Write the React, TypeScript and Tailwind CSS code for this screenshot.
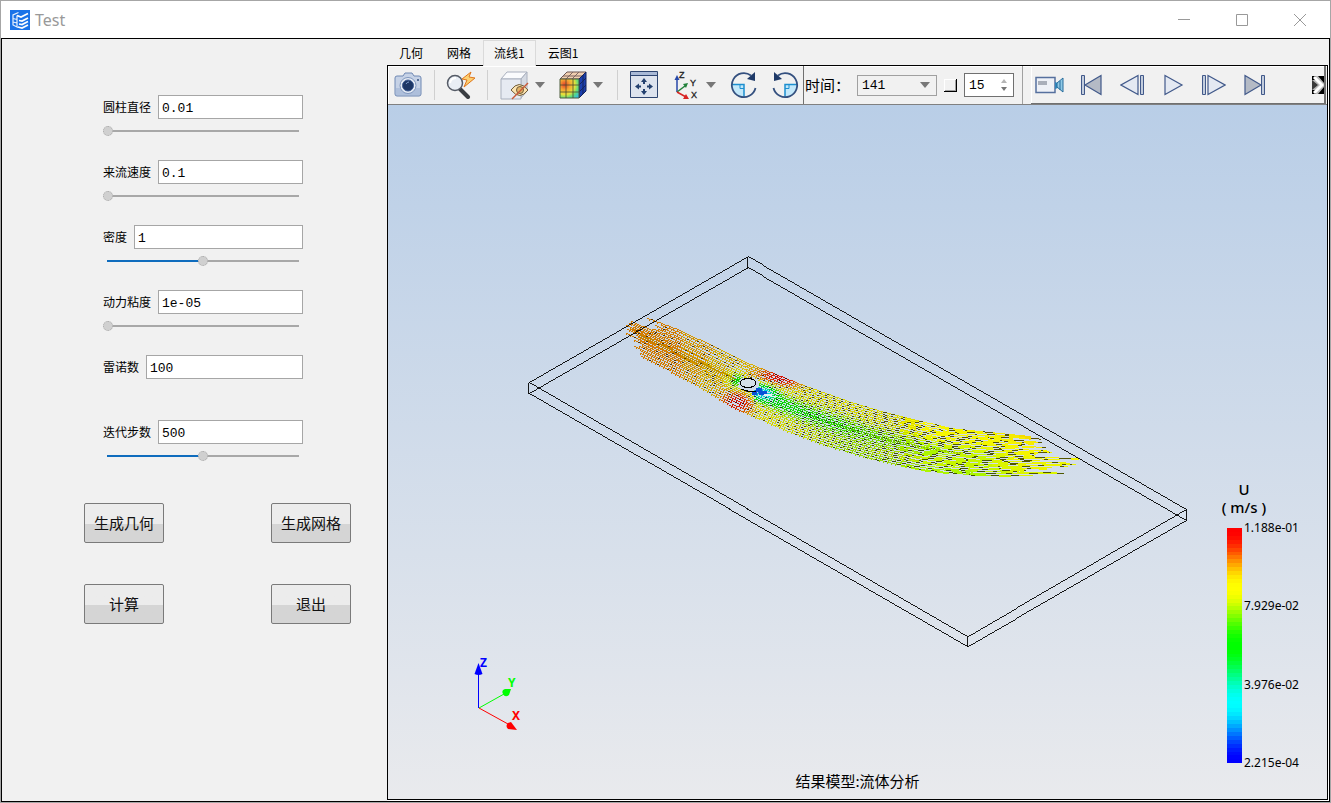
import { useState, type ReactNode } from "react";
import clsx from "clsx";

const params = [
  { id: "diameter", label: "圆柱直径", value: "0.01", slider: 0 },
  { id: "velocity", label: "来流速度", value: "0.1", slider: 0 },
  { id: "density", label: "密度", value: "1", slider: 50 },
  { id: "viscosity", label: "动力粘度", value: "1e-05", slider: 0 },
  { id: "reynolds", label: "雷诺数", value: "100", slider: null },
  { id: "steps", label: "迭代步数", value: "500", slider: 50 },
];

const actions = ["生成几何", "生成网格", "计算", "退出"];
const tabs = ["几何", "网格", "流线1", "云图1"];
const legendLabels = ["1.188e-01", "7.929e-02", "3.976e-02", "2.215e-04"];

// blue -> cyan -> green -> yellow -> red
const stops = [
  [0, 0, 255],
  [0, 255, 255],
  [0, 255, 0],
  [255, 255, 0],
  [255, 0, 0],
];

function rainbow(s: number, light = 1) {
  const t = Math.min(0.9999, Math.max(0, s)) * 4;
  const i = Math.floor(t);
  const f = t - i;
  const e = f * f * (3 - 2 * f);
  const rgb = stops[i].map((c, k) => Math.round((c + (stops[i + 1][k] - c) * e) * light));
  return `rgb(${rgb.join(",")})`;
}

const BANDS = 60;
const bands = Array.from({ length: BANDS }, (_, i) => rainbow(1 - i / (BANDS - 1)));

type Point = [number, number];

const upperEdge: Point[] = [
  [626, 308], [647, 318], [677, 329], [717, 348], [750, 364], [800, 384],
  [850, 402], [887, 413], [950, 428], [1000, 433], [1040, 437], [1090, 441],
];
const lowerEdge: Point[] = [
  [626, 348], [640, 355], [700, 387], [733, 407], [783, 429], [820, 443],
  [870, 458], [920, 469], [975, 475], [1090, 475],
];

function edgeAt(edge: Point[], x: number) {
  const i = Math.max(1, edge.findIndex((p) => p[0] >= x));
  const [x0, y0] = edge[i - 1];
  const [x1, y1] = edge[i];
  return y0 + ((x - x0) / (x1 - x0)) * (y1 - y0);
}

const noise = (n: number) => {
  const v = Math.sin(n * 12.9898) * 43758.5453;
  return v - Math.floor(v);
};

const bell = (d: number, w: number) => Math.exp(-(d * d) / (w * w));

function speedAt(x: number, y: number, v: number) {
  const right = Math.min(1, Math.max(0, (x - 680) / 160));
  let s = 0.85 - right * (0.09 + 0.1 * v);
  if (x > 980) s += 0.04 * Math.min(1, (x - 980) / 50);
  s += 0.18 * bell(Math.hypot((x - 778) / 2.6, y - 378), 10);
  s += 0.18 * bell(Math.hypot((x - 738) / 1.4, y - 402), 13);
  if (x > 752) s -= 0.34 * bell(v - 0.5, 0.2) * Math.exp(-(x - 752) / 90);
  s -= 0.4 * bell(Math.hypot((x - 762) / 1.6, y - 391), 8);
  s -= 0.3 * bell(Math.hypot(x - 736, y - 380), 8);
  return s;
}

const LINES = 24;
const starts = [647, 661, 655, 658, 652, 631, 634, 629, 633, 626, 632, 630, 627, 636, 638, 626, 640, 634, 642, 639, 634, 641, 640, 641];
const ends = [1030, 1041, 1012, 1042, 1034, 1024, 1046, 1018, 1048, 1052, 1036, 1034, 1078, 1060, 1040, 1070, 1076, 1068, 1052, 1046, 1026, 1056, 1063, 1032];

function buildStreaks() {
  const byColor = new Map<string, string>();
  const add = (color: string, x: number, y: number, w: number) =>
    byColor.set(color, `${byColor.get(color) ?? ""}M${x} ${y}h${w}v1h-${w}z`);
  for (let l = 0; l < LINES; l++) {
    const v = l / (LINES - 1);
    const yAt = (x: number) => {
      const top = edgeAt(upperEdge, x);
      const height = edgeAt(lowerEdge, x) - top;
      // lines are drawn towards the centre upstream of the cylinder
      const pull = x < 745 ? 0.04 * Math.sin(v * Math.PI * 2) : 0;
      return Math.round(top + (v + pull) * height);
    };
    let x = starts[l];
    let next = x + 3 + Math.round(noise(l * 5.3) * 6);
    let markEnd = 0;
    while (x < ends[l]) {
      const y = yAt(x);
      const far = Math.max(0, (x - 860) / 200);
      if (x >= next) {
        markEnd = x + 2 + Math.round(far * 12 * noise(l * 3.1 + x));
        next = x + Math.round(6 + far * 16 + noise(l * 7.7 + x * 0.31) * (3 + far * 12));
      }
      if (Math.hypot((x - 748) / 11, (y - 384) / 7) >= 1) {
        const s = Math.round(speedAt(x, y, v) * 50) / 50;
        const dark = x < markEnd && (x > 800 || noise(l + x * 3) < 0.4);
        const light = dark ? 0.34 : x < 740 ? 0.84 : x < 920 ? 0.86 : 0.96;
        add(rainbow(s, light), x, y, 2);
        if (!dark && x < 900 && (x + l * 2) % 4 < 2) add(rainbow(s, 0.8), x, y + 1, 1);
        // rows thicken in runs where the streaks stretch out
        if (!dark && x >= 900 && noise(l * 4.7 + Math.floor((x + l * 5) / 14)) < 0.5) add(rainbow(s, 0.96), x, y + 1, 2);
      }
      x += 2;
    }
  }
  // dense streak on the symmetry line
  for (let x = 640; x < 735; x += 2) {
    const y = Math.round(332 + (x - 634) * 0.46);
    add("rgb(184,134,0)", x, y, 2);
    add("rgb(184,134,0)", x, y + 2, 1);
  }
  for (let x = 800; x < 960; x += 3) {
    const top = edgeAt(upperEdge, x);
    const y = Math.round(top + 0.53 * (edgeAt(lowerEdge, x) - top));
    const color = rainbow(speedAt(x, y, 0.53), 0.78);
    add(color, x, y, 2);
    add(color, x + 1, y + 1, 1);
  }
  return [...byColor];
}

const streaks = buildStreaks();

function Scene() {
  return (
    <svg viewBox="388 105 939 694" className="absolute inset-0 h-full w-full" aria-hidden="true">
      <g shapeRendering="crispEdges" fill="none" strokeWidth="1">
        {streaks.map(([color, d]) => (
          <path key={color} d={d} fill={color} />
        ))}
        <path d="M756 388h6v3h5v4h-8v-3h-4zM752 392h5v3h-5z" fill="#0a50d8" />
        <path d="M764 394h8v2h-8zM771 396h6v1h-6z" fill="#e4f0f4" />
        <path
          stroke="#000"
          strokeWidth=".9"
          d="M747.5 256.5L528.5 382.5L967.500 636.5L1186.500 509.5ZM747.500 267.5L528.5 393.5L967.500 646.5L1186.500 520.5ZM747.500 256.5V267.5M528.5 382.5V393.5M967.500 636.5V646.5M1186.500 509.5V520.5"
        />
        <ellipse cx="748" cy="383" rx="8" ry="4.5" fill="#d4dfe8" stroke="#000" />
        <path d="M741 389q7 3 15 3" stroke="#000" />
      </g>
      <g fontFamily="'Noto Sans', sans-serif" fontSize="12" fontWeight="700">
        <path d="M478.5 708V672" stroke="#00f" />
        <path d="M478.5 663l4 11q-4 2-8 0z" fill="#00f" />
        <text x="480" y="667" fill="#00f">Z</text>
        <path d="M479 708L504 694" stroke="#0f0" />
        <path d="M511 689l-2 6q-4 3-6-1t2-5z" fill="#0f0" />
        <text x="508" y="687" fill="#0f0">Y</text>
        <path d="M479 708L508 724" stroke="#f00" />
        <path d="M517 730l-9-1q-3-3 0-6l3-1z" fill="#f00" />
        <text x="512" y="720" fill="#f00">X</text>
      </g>
    </svg>
  );
}

function Legend() {
  return (
    <div className="absolute right-7 bottom-[30px] font-['Noto_Sans',sans-serif] text-black">
      <div className="mb-1.5 w-[42px] text-center text-[15px] leading-[18px] font-medium">
        <div>U</div>
        <div className="-mx-4 whitespace-nowrap">( m/s )</div>
      </div>
      <div className="flex gap-0.5 pl-1">
        <div className="mt-1.5 mb-1.5 flex h-[235px] w-[15px] flex-col">
          {bands.map((color, i) => (
            <div key={i} className="flex-1" style={{ backgroundColor: color }} />
          ))}
        </div>
        <div className="flex flex-col justify-between text-xs leading-3">
          {legendLabels.map((label) => (
            <span key={label}>{label}</span>
          ))}
        </div>
      </div>
    </div>
  );
}

function ToolButton({ label, className, children }: { label: string; className?: string; children: ReactNode }) {
  return (
    <button type="button" aria-label={label} className={clsx("flex h-8 shrink-0 items-center justify-center", className)}>
      {children}
    </button>
  );
}

function Separator({ className }: { className?: string }) {
  return <div className={clsx("h-[30px] w-px shrink-0 bg-[#d0d0d0]", className)} />;
}

function DropArrow({ label, className }: { label: string; className?: string }) {
  return (
    <ToolButton label={label} className={clsx("w-[10px]", className)}>
      <svg width="10" height="6" viewBox="0 0 10 6">
        <path d="M0 0h10L5 6z" fill="#777" />
      </svg>
    </ToolButton>
  );
}

function CameraIcon() {
  return (
    <svg width="28" height="26" viewBox="0 0 28 26">
      <path d="M1 6q0-2 2-2h6l2-3h7l2 3h5q2 0 2 2v16q0 2-2 2H3q-2 0-2-2z" fill="#c6d2e6" stroke="#6f88b3" />
      <path d="M2 16h24v7H2z" fill="#9fb3d4" opacity=".6" />
      <circle cx="14" cy="13.500" r="8" fill="#e6ecf5" stroke="#7f96bd" />
      <circle cx="14" cy="13.500" r="5.500" fill="#1d3766" stroke="#3f5d93" />
      <path d="M12 12q1-2 3-2" stroke="#7f9ccb" fill="none" />
      <circle cx="24" cy="8" r="1" fill="#34507f" />
    </svg>
  );
}

function ProbeIcon() {
  return (
    <svg width="30" height="28" viewBox="0 0 30 28">
      <path d="M14 18l8 8" stroke="#3a3d42" strokeWidth="4" strokeLinecap="round" />
      <circle cx="9" cy="12" r="7.500" fill="#e9eef5" stroke="#555b66" strokeWidth="1.500" />
      <path d="M4 12q1-5 6-5" stroke="#fff" strokeWidth="2" fill="none" />
      <path d="M25 1l-9 7 5 1-3 7 11-9-6-1z" fill="#fcd071" stroke="#e0761c" />
    </svg>
  );
}

function HiddenCubeIcon() {
  return (
    <svg width="29" height="29" viewBox="0 0 29 29">
      <path d="M1 8l6-7h20l-6 7z" fill="#fafbfd" stroke="#a9b0be" />
      <path d="M21 8l6-7v19l-6 7z" fill="#d5dae3" stroke="#a9b0be" />
      <path d="M1 8h20v20H1z" fill="#e6eaf2" stroke="#a9b0be" />
      <path d="M11 19q8-11 17 0-8 11-17 0z" fill="#fbe3b0" stroke="#6d5a3b" />
      <circle cx="20" cy="19" r="3.500" fill="#e2b468" stroke="#6d5a3b" />
      <path d="M28 12L12 28" stroke="#c85838" strokeWidth="1.500" />
    </svg>
  );
}

function ResultCubeIcon() {
  return (
    <svg width="28" height="28" viewBox="0 0 28 28">
      <defs>
        <radialGradient id="cubeFace" cx="0.25" cy="0.3" r=".95">
          <stop offset="0" stopColor="#e8402a" />
          <stop offset=".3" stopColor="#f7a832" />
          <stop offset=".55" stopColor="#e6e23a" />
          <stop offset=".75" stopColor="#5fdc7a" />
          <stop offset="1" stopColor="#2ab8f0" />
        </radialGradient>
      </defs>
      <path d="M1 8l7-7h19l-7 7z" fill="#f0cfb0" stroke="#6a5550" />
      <path d="M7 8l7-7M13 8l7-7M4 5h20" stroke="#7d6560" />
      <path d="M20 8l7-7v19l-7 7z" fill="#1b3fae" stroke="#15245c" />
      <path d="M20 14l7-7M20 21l7-7M24 4v19" stroke="#15245c" />
      <path d="M1 8h19v19H1z" fill="url(#cubeFace)" stroke="#4c5c3c" />
      <path d="M7 8v19M14 8v19M1 14h19M1 21h19" stroke="#4c4a30" strokeWidth=".8" />
    </svg>
  );
}

function FitIcon() {
  return (
    <svg width="28" height="28" viewBox="0 0 28 28">
      <path d="M.5.5h27v26H.5z" fill="#dde3ee" stroke="#2d4470" />
      <path d="M1 1h26v3H1z" fill="#a9b9d6" />
      <path d="M1 4.500h26" stroke="#2d4470" />
      <path d="M14 7l3 4h-2v2h-2v-2h-2zM14 24l3-4h-2v-2h-2v2h-2zM5 15.500l4-3v2h2v2H9v2zM23 15.500l-4-3v2h-2v2h2v2z" fill="#23406f" />
    </svg>
  );
}

function AxesIcon() {
  return (
    <svg width="24" height="30" viewBox="0 0 24 30">
      <path d="M3 22V9" stroke="#2747a8" strokeWidth="1.500" />
      <path d="M3 5l2.500 5h-5z" fill="#2747a8" />
      <path d="M3 22l8-6" stroke="#23823b" strokeWidth="1.500" />
      <path d="M14 13l-2 5-3-4z" fill="#23823b" />
      <path d="M3 22l9 5" stroke="#d82525" strokeWidth="1.500" />
      <path d="M15 29l-6 0 3-5z" fill="#d82525" />
      <g fontFamily="'Liberation Sans', sans-serif" fontSize="9" fill="#222" stroke="#222" strokeWidth=".3">
        <text x="5" y="8">Z</text>
        <text x="16" y="16">Y</text>
        <text x="17" y="28">X</text>
      </g>
    </svg>
  );
}

function RotateIcon({ flip }: { flip?: boolean }) {
  return (
    <svg width="28" height="28" viewBox="0 0 28 28" className={flip ? "-scale-x-100" : undefined}>
      <path d="M2 13.500h12V26A12 12 0 0 1 2 13.500z" fill="#c3e8fa" />
      <path d="M2 13.500h12V26" fill="none" stroke="#1c8fd0" strokeWidth="1.500" />
      <path d="M10 13.500v4h4" fill="none" stroke="#1c8fd0" />
      <path d="M21 4.500A12 12 0 1 0 25.500 17" fill="none" stroke="#34507f" strokeWidth="1.800" />
      <path d="M25 1v9l-8-2z" fill="#1f3a68" />
    </svg>
  );
}

function RecordIcon() {
  return (
    <svg width="30" height="18" viewBox="0 0 30 18">
      <path d="M1 1.500h19v15H1z" fill="#eef1f7" stroke="#56709e" strokeWidth="1.500" />
      <path d="M3 5h9v4H3z" fill="#a9afba" />
      <path d="M20 6l3 1v5l-3 1z" fill="#2f87bd" />
      <path d="M22 7l6-5v14l-6-5z" fill="#8fc9e6" stroke="#276c9c" />
      <path d="M25 5v9" stroke="#276c9c" />
    </svg>
  );
}

// prev/next step and first/last frame share one triangle and bar, mirrored as needed
function PlaybackIcon({ kind, flip }: { kind: "end" | "step" | "play"; flip?: boolean }) {
  return (
    <svg width="24" height="22" viewBox="0 0 24 22" className={flip ? "-scale-x-100" : undefined}>
      {kind === "play" && <path d="M4 1.500L21 11 4 20.500z" fill="#e4e9f2" stroke="#41598a" strokeWidth="1.200" />}
      {kind === "end" && (
        <>
          <path d="M2 1.500L18 11 2 20.500z" fill="#b4bac5" stroke="#41598a" strokeWidth="1.200" />
          <path d="M18.500 1.500h3v19h-3z" fill="#c3cddd" stroke="#41598a" />
        </>
      )}
      {kind === "step" && (
        <>
          <path d="M.5 1.500h3v19h-3z" fill="#c3cddd" stroke="#41598a" />
          <path d="M6 1.500L23 11 6 20.500z" fill="#e4e9f2" stroke="#41598a" strokeWidth="1.200" />
        </>
      )}
    </svg>
  );
}

function Toolbar() {
  return (
    <div className="flex h-[39px] shrink-0 items-center overflow-hidden border-b border-[#808080] bg-[#f1f1f1] shadow-[inset_1px_1px_0_#fff]">
      <ToolButton label="截图" className="ml-1.5"><CameraIcon /></ToolButton>
      <Separator className="mr-[11px] ml-3" />
      <ToolButton label="探测"><ProbeIcon /></ToolButton>
      <Separator className="mr-3 ml-[11px]" />
      <ToolButton label="显示"><HiddenCubeIcon /></ToolButton>
      <DropArrow label="显示选项" className="ml-1.5" />
      <ToolButton label="云图" className="ml-3.5"><ResultCubeIcon /></ToolButton>
      <DropArrow label="云图选项" className="ml-1.5" />
      <Separator className="mr-3 ml-3.5" />
      <ToolButton label="适应窗口"><FitIcon /></ToolButton>
      <ToolButton label="视角" className="ml-4"><AxesIcon /></ToolButton>
      <DropArrow label="视角选项" className="ml-2" />
      <ToolButton label="顺时针旋转" className="ml-3.5"><RotateIcon /></ToolButton>
      <ToolButton label="逆时针旋转" className="ml-[13px]"><RotateIcon flip /></ToolButton>

      <div className="ml-1 flex h-full shrink-0 items-center border-l border-[#707070] pl-px">
        <label htmlFor="time" className="w-[52px] text-[15px] whitespace-nowrap">时间：</label>
        <div className="relative">
          <select
            id="time"
            className="block h-[21px] w-20 appearance-none border border-[#a0a0a0] bg-[#f1f1f1] pl-1 font-['Liberation_Mono',monospace] text-[13px]"
          >
            <option>141</option>
          </select>
          <svg width="10" height="6" viewBox="0 0 10 6" className="pointer-events-none absolute top-[7px] right-[7px]">
            <path d="M0 0h10L5 6z" fill="#777" />
          </svg>
        </div>
        <input
          type="checkbox"
          aria-label="循环"
          className="ml-[7px] h-[13px] w-[13px] appearance-none border-r border-b border-black bg-[#f1f1f1] shadow-[inset_1px_1px_0_#fff,inset_-1px_-1px_0_#a0a0a0]"
        />
        <div className="relative ml-[7px]">
          <input
            type="number"
            aria-label="帧率"
            defaultValue={15}
            className="block h-6 w-[50px] border border-[#707070] bg-white pl-1 font-['Liberation_Mono',monospace] text-[13px] [appearance:textfield] [&::-webkit-inner-spin-button]:appearance-none"
          />
          <svg width="6" height="12" viewBox="0 0 6 12" className="pointer-events-none absolute top-1.5 right-[7px]">
            <path d="M3 0l3 4H0z" fill="#b5b5b5" />
            <path d="M0 8h6l-3 4z" fill="#777" />
          </svg>
        </div>
      </div>

      <div className="ml-2 flex h-full min-w-0 flex-1 border-l border-[#a0a0a0] pr-px pl-2">
        <div className="flex min-w-0 flex-1 items-center border-r-2 border-b border-[#707070] pl-1 shadow-[inset_1px_1px_0_#fff]">
          <ToolButton label="录制"><RecordIcon /></ToolButton>
          <ToolButton label="首帧" className="ml-3.5"><PlaybackIcon kind="end" flip /></ToolButton>
          <ToolButton label="上一帧" className="ml-[17px]"><PlaybackIcon kind="step" flip /></ToolButton>
          <ToolButton label="播放" className="ml-[17px]"><PlaybackIcon kind="play" /></ToolButton>
          <ToolButton label="下一帧" className="ml-[17px]"><PlaybackIcon kind="step" /></ToolButton>
          <ToolButton label="末帧" className="ml-[17px]"><PlaybackIcon kind="end" /></ToolButton>
          <ToolButton label="更多" className="ml-auto">
            <svg width="12" height="18" viewBox="0 0 12 18">
              <path d="M0 0h12v18H0z" fill="#b8b8b8" />
              <path d="M0 0h4v4H0zM0 14h4v4H0zM6 0h6v7zM6 18h6v-7z" fill="#000" />
              <path d="M0 4l6 5-6 5z" fill="#3a3a3a" />
              <path d="M2 1l8 8-8 8" fill="none" stroke="#fff" strokeWidth="3" />
            </svg>
          </ToolButton>
        </div>
      </div>
    </div>
  );
}

function ParamRow({ id, label, value, slider }: (typeof params)[number]) {
  const [pos, setPos] = useState(slider ?? 0);
  return (
    <div className="h-[65px]">
      <div className="flex items-center gap-[7px]">
        <label htmlFor={id} className="text-xs whitespace-nowrap">{label}</label>
        <input
          id={id}
          type="text"
          defaultValue={value}
          className="h-6 min-w-0 flex-1 border border-[#a6a6a6] bg-white pt-0.5 pl-[3px] font-['Liberation_Mono',monospace] text-[13px]"
        />
      </div>
      {slider !== null && (
        <input
          type="range"
          aria-label={label}
          value={pos}
          onChange={(e) => setPos(Number(e.target.value))}
          className="mt-[7px] block h-[10px] w-full appearance-none bg-[length:calc(100%-8px)_2px] bg-center bg-no-repeat [&::-webkit-slider-thumb]:h-[10px] [&::-webkit-slider-thumb]:w-[10px] [&::-webkit-slider-thumb]:appearance-none [&::-webkit-slider-thumb]:rounded-full [&::-webkit-slider-thumb]:border [&::-webkit-slider-thumb]:border-dotted [&::-webkit-slider-thumb]:border-[#a8a8a8] [&::-webkit-slider-thumb]:bg-[#d0d0d0]"
          style={{ backgroundImage: `linear-gradient(to right, #0f6cbd ${pos}%, #a8a8a8 ${pos}%)` }}
        />
      )}
    </div>
  );
}

function TitleBar() {
  return (
    <header className="flex h-[37px] items-center bg-white pl-[9px]">
      <svg width="20" height="20" viewBox="0 0 20 20">
        <path d="M0 0h20v20H0z" fill="#1a73e8" />
        <path d="M8.500 2.500L3 5v10l5 2.500M3 8.500l4 1M3 12l4 1M7 5.500v11" fill="none" stroke="#e8f1fd" strokeWidth="1.200" />
        <path d="M7 5.500l4 1.500 7-3.500M9 10.500l3 .5 6-3M9 14l3 .5 6-3M8 17l4 1 6-3" fill="none" stroke="#fff" strokeWidth="1.700" />
      </svg>
      <h1 className="ml-[5px] flex-1 font-['Noto_Sans',sans-serif] text-base text-[#999]">Test</h1>
      <button type="button" aria-label="最小化" className="flex h-full w-[58px] items-center justify-center">
        <svg width="12" height="12" viewBox="0 0 12 12"><path d="M0 5.500h12" stroke="#999" /></svg>
      </button>
      <button type="button" aria-label="最大化" className="flex h-full w-[58px] items-center justify-center">
        <svg width="12" height="12" viewBox="0 0 12 12"><path d="M.5.5h11v11H.5z" fill="none" stroke="#999" /></svg>
      </button>
      <button type="button" aria-label="关闭" className="mr-px flex h-full w-[58px] items-center justify-center">
        <svg width="12" height="12" viewBox="0 0 12 12"><path d="M0 0l12 12M12 0L0 12" stroke="#999" /></svg>
      </button>
    </header>
  );
}

export default function App() {
  const [active, setActive] = useState("流线1");

  return (
    <div className="flex min-h-screen flex-col border border-[#a6a6a6] bg-white font-['Noto_Sans_CJK_SC',sans-serif] text-black">
      <TitleBar />
      <main className="flex flex-1 border border-black bg-[#f1f1f1]">
        <aside className="w-[385px] shrink-0 pt-14">
          <form className="ml-[101px] w-[200px]">
            {params.map((p) => (
              <ParamRow key={p.id} {...p} />
            ))}
          </form>
          <div className="mt-[18px] ml-[82px] grid w-[267px] grid-cols-[80px_80px] justify-between gap-y-[41px]">
            {actions.map((name) => (
              <button
                key={name}
                type="button"
                className="h-10 rounded-[2px] border border-[#7a7a7a] bg-linear-to-b from-[#ececec] from-52% to-[#d5d5d5] to-52% text-[15px] text-[#111]"
              >
                {name}
              </button>
            ))}
          </div>
        </aside>

        <section className="flex min-w-0 flex-1 flex-col">
          <div role="tablist" className="flex h-[26px]">
            {tabs.map((tab) => (
              <button
                key={tab}
                type="button"
                role="tab"
                aria-selected={tab === active}
                onClick={() => setActive(tab)}
                className={clsx(
                  "border text-xs",
                  tab === active
                    ? "relative z-10 mt-px -mb-px border-b-0 border-[#dadada] bg-[#f3f3f3] px-[10px] pb-0.5"
                    : "border-transparent px-[11px] pt-px"
                )}
              >
                {tab}
              </button>
            ))}
          </div>
          <div className="flex flex-1 flex-col bg-white pr-px pb-px">
            <div className="flex flex-1 flex-col border border-black">
              <Toolbar />
              <div className="relative flex-1 overflow-hidden bg-linear-to-b from-[#b9cee7] to-[#e9eaed]">
                <Scene />
                <Legend />
                <p className="absolute inset-x-0 bottom-1.5 text-center text-[15px] leading-6">结果模型:流体分析</p>
              </div>
            </div>
          </div>
        </section>
      </main>
    </div>
  );
}
